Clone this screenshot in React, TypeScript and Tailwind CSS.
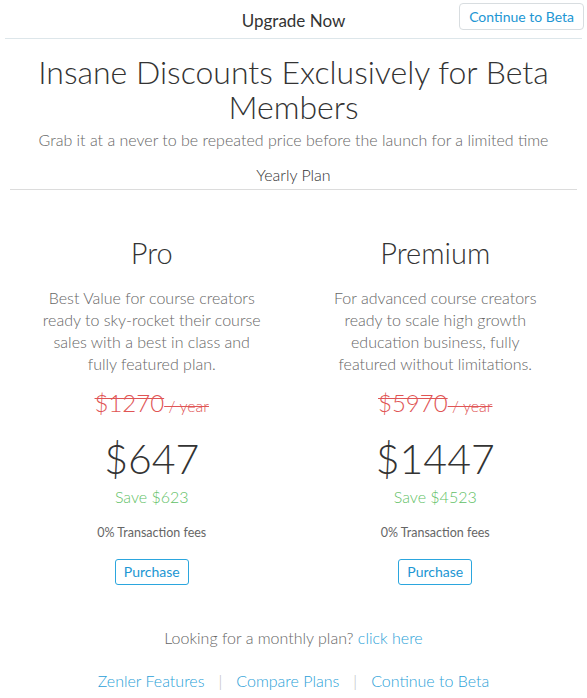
const font = { fontFamily: "Lato, 'Open Sans', sans-serif" };

type Plan = { name: string; desc: string; old: string; price: string; save: string };

const plans: Plan[] = [
  {
    name: "Pro",
    desc: "Best Value for course creators ready to sky-rocket their course sales with a best in class and fully featured plan.",
    old: "$1270",
    price: "$647",
    save: "Save $623",
  },
  {
    name: "Premium",
    desc: "For advanced course creators ready to scale high growth education business, fully featured without limitations.",
    old: "$5970",
    price: "$1447",
    save: "Save $4523",
  },
];

function PlanCard({ plan }: { plan: Plan }) {
  return (
    <div className="flex flex-col items-center text-center">
      <h2 className="text-[29px] font-light leading-none text-[#333]">{plan.name}</h2>
      <p className="mt-[20px] w-[226px] text-[16px] font-light leading-[22px] text-[#666]">{plan.desc}</p>
      <div className="mt-[14px] leading-[28px] text-[#e05555] line-through">
        <span className="text-[24px] font-light">{plan.old}</span>
        <span className="text-[16px] font-light"> / year</span>
      </div>
      <div className="mt-[17px] text-[41px] font-light leading-[44px] text-[#333]">{plan.price}</div>
      <div className="mt-[6px] text-[16px] font-light leading-[20px] text-[#5fbf66]">{plan.save}</div>
      <div className="mt-[18px] text-[12.5px] leading-[16px] text-[#666]">0% Transaction fees</div>
      <button className="mt-[18px] h-[26px] rounded-[3px] border border-[#2ba6de] px-[8px] text-[14px] leading-none text-[#2196d3]">
        Purchase
      </button>
    </div>
  );
}

export default function App() {
  return (
    <div className="w-[587px] bg-white" style={font}>
      <div className="relative mx-[5px] flex h-[39px] items-center justify-center border-b border-[#dde6ea]">
        <span className="mt-[4px] text-[17px] text-[#333]">Upgrade Now</span>
        <button className="absolute right-[-2px] top-[3px] h-[27px] rounded-[4px] border border-[#d8dde0] px-[9px] text-[14px] leading-none text-[#2196d3]">
          Continue to Beta
        </button>
      </div>
      <div className="mx-[10px] border-b border-[#dcdcdc] pb-[4px] text-center">
        <h1 className="mt-[15px] text-[32px] font-light leading-[35px] text-[#333]">
          Insane Discounts Exclusively for Beta
          <br />
          Members
        </h1>
        <p className="mt-[6px] text-[16px] font-light leading-[20px] text-[#666]">
          Grab it at a never to be repeated price before the launch for a limited time
        </p>
        <p className="mt-[15px] text-[16px] font-light leading-[20px] text-[#333]">Yearly Plan</p>
      </div>
      <div className="mx-[10px] mt-[48px] grid grid-cols-2">
        {plans.map((p) => (
          <PlanCard key={p.name} plan={p} />
        ))}
      </div>
      <p className="mt-[43px] text-center text-[16px] font-light leading-[20px] text-[#666]">
        Looking for a monthly plan? <a className="text-[#2b9fd8]">click here</a>
      </p>
      <div className="mt-[23px] flex justify-center gap-[14px] pb-[8px] text-[16px] font-light leading-[20px] text-[#2b9fd8]">
        <a>Zenler Features</a>
        <span className="text-[#bbb]">|</span>
        <a>Compare Plans</a>
        <span className="text-[#bbb]">|</span>
        <a>Continue to Beta</a>
      </div>
    </div>
  );
}
